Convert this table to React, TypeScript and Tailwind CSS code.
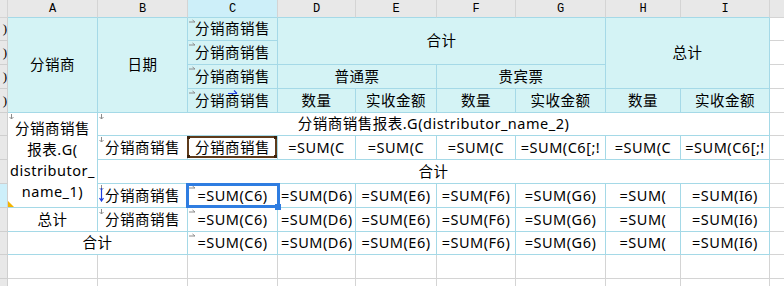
import type { ReactNode } from 'react';

const blue = 'border-[#a5d9e7]';
const grey = 'border-[#d4d4d4]';

function RightMark() {
  return (
    <svg className="absolute left-[1px] top-[1px]" width="7" height="5" viewBox="0 0 7 5">
      <path d="M0 3H6M3.5 1L6 3" stroke="#8c8c8c" strokeWidth="1" fill="none" />
    </svg>
  );
}

function DownMark() {
  return (
    <svg className="absolute left-[1px] top-[1px]" width="5" height="6" viewBox="0 0 5 6">
      <path d="M2.5 0V5M0.5 3L2.5 5L4.5 3" stroke="#8c8c8c" strokeWidth="1" fill="none" />
    </svg>
  );
}

function Cell({
  pos,
  children,
  className = '',
  mark,
}: {
  pos: string;
  children?: ReactNode;
  className?: string;
  mark?: ReactNode;
}) {
  return (
    <div className={`relative flex items-center border-r border-b ${pos} ${className}`}>
      {mark}
      <div className="w-full overflow-hidden whitespace-nowrap px-[3px] text-center">{children}</div>
    </div>
  );
}

const headers = [
  { pos: 'col-start-2', label: 'A' },
  { pos: 'col-start-3', label: 'B' },
  { pos: 'col-start-4', label: 'C' },
  { pos: 'col-start-5', label: 'D' },
  { pos: 'col-start-6', label: 'E' },
  { pos: 'col-start-7', label: 'F' },
  { pos: 'col-start-8', label: 'G' },
  { pos: 'col-start-9', label: 'H' },
  { pos: 'col-start-10', label: 'I' },
];

const rowHeads = [
  { pos: 'row-start-2', text: ')' },
  { pos: 'row-start-3', text: ')' },
  { pos: 'row-start-4', text: ')' },
  { pos: 'row-start-5', text: ')' },
  { pos: 'row-start-6', text: '' },
  { pos: 'row-start-7', text: '' },
  { pos: 'row-start-8', text: '' },
  { pos: 'row-start-9', text: '', active: true },
  { pos: 'row-start-10', text: '' },
  { pos: 'row-start-11', text: '' },
  { pos: 'row-start-12', text: '' },
  { pos: 'row-start-13', text: '' },
];

const sixRow = [
  { pos: 'col-start-5 row-start-7', text: '=SUM(C' },
  { pos: 'col-start-6 row-start-7', text: '=SUM(C' },
  { pos: 'col-start-7 row-start-7', text: '=SUM(C' },
  { pos: 'col-start-8 row-start-7', text: '=SUM(C6[;!' },
  { pos: 'col-start-9 row-start-7', text: '=SUM(C' },
  { pos: 'col-start-10 row-start-7', text: '=SUM(C6[;!' },
];

const sumRows = ['row-start-9', 'row-start-10', 'row-start-11'];
const sumCols = ['col-start-5', 'col-start-6', 'col-start-7', 'col-start-8', 'col-start-9', 'col-start-10'];
const sumTexts = ['=SUM(D6)', '=SUM(E6)', '=SUM(F6)', '=SUM(G6)', '=SUM(', '=SUM(I6)'];

const emptyCols = ['col-start-2', 'col-start-3', 'col-start-4', 'col-start-5', 'col-start-6', 'col-start-7', 'col-start-8', 'col-start-9', 'col-start-10'];
const jRows = ['row-start-2', 'row-start-3', 'row-start-4', 'row-start-5', 'row-start-6', 'row-start-7', 'row-start-8', 'row-start-9', 'row-start-10', 'row-start-11', 'row-start-12', 'row-start-13'];

export default function App() {
  const cyan = `bg-[#d4f3f5] ${blue}`;
  return (
    <div className="h-[286px] w-[784px] overflow-hidden bg-white font-['Noto_Sans','Noto_Sans_CJK_SC',sans-serif] text-[14.5px] tracking-[0.5px] text-black">
      <div className="grid grid-cols-[8px_90px_90px_90px_78px_81px_79px_90px_75px_89px_14px] grid-rows-[18px_23px_24px_24px_24px_23px_24px_24px_24px_24px_23px_24px_8px]">
        {/* column header */}
        <div className={`col-start-1 row-start-1 border-r border-b bg-[#e8e8e8] ${grey}`} />
        {headers.map((h) => (
          <div
            key={h.label}
            className={`${h.pos} row-start-1 flex items-center justify-center border-r border-b border-r-[#d4d4d4] border-b-[#a5d9e7] font-['Liberation_Mono',monospace] text-[12px] tracking-normal ${
              h.label === 'C' ? 'bg-[#cdeff9]' : 'bg-[#e8e8e8]'
            }`}
          >
            {h.label}
          </div>
        ))}
        <div className={`col-start-11 row-start-1 border-b bg-[#e8e8e8] ${grey}`} />

        {/* row header */}
        {rowHeads.map((r) => (
          <div
            key={r.pos}
            className={`col-start-1 ${r.pos} flex items-center justify-end overflow-hidden border-r border-b border-[#cfcfcf] font-['Liberation_Serif',serif] text-[13px] tracking-normal ${
              r.active ? 'bg-[#cdeffa]' : 'bg-[#e8e8e8]'
            }`}
          >
            {r.text}
          </div>
        ))}

        {/* report header */}
        <Cell pos="col-start-2 row-start-2 row-span-4" className={cyan}>分销商</Cell>
        <Cell pos="col-start-3 row-start-2 row-span-4" className={cyan}>日期</Cell>
        <Cell pos="col-start-4 row-start-2" className={cyan} mark={<RightMark />}>分销商销售</Cell>
        <Cell pos="col-start-4 row-start-3" className={cyan} mark={<RightMark />}>分销商销售</Cell>
        <Cell pos="col-start-4 row-start-4" className={cyan} mark={<RightMark />}>分销商销售</Cell>
        <Cell
          pos="col-start-4 row-start-5"
          className={cyan}
          mark={
            <>
              <RightMark />
              <svg className="absolute left-[40px] top-[1px] z-10" width="10" height="5" viewBox="0 0 10 5">
                <path d="M0 3.5H9M6 0.5L9 3.5" stroke="#1f3ee0" strokeWidth="1.2" fill="none" />
              </svg>
            </>
          }
        >
          分销商销售
        </Cell>
        <Cell pos="col-start-5 col-span-4 row-start-2 row-span-2" className={cyan}>合计</Cell>
        <Cell pos="col-start-9 col-span-2 row-start-2 row-span-3" className={cyan}>总计</Cell>
        <Cell pos="col-start-5 col-span-2 row-start-4" className={cyan}>普通票</Cell>
        <Cell pos="col-start-7 col-span-2 row-start-4" className={cyan}>贵宾票</Cell>
        <Cell pos="col-start-5 row-start-5" className={cyan}>数量</Cell>
        <Cell pos="col-start-6 row-start-5" className={cyan}>实收金额</Cell>
        <Cell pos="col-start-7 row-start-5" className={cyan}>数量</Cell>
        <Cell pos="col-start-8 row-start-5" className={cyan}>实收金额</Cell>
        <Cell pos="col-start-9 row-start-5" className={cyan}>数量</Cell>
        <Cell pos="col-start-10 row-start-5" className={cyan}>实收金额</Cell>

        {/* body */}
        <div className={`relative col-start-2 row-start-6 row-span-4 flex items-center justify-center border-r border-b ${blue}`}>
          <DownMark />
          <div className="text-center leading-[21px]">
            分销商销售
            <br />
            报表.G(
            <br />
            distributor_
            <br />
            name_1)
          </div>
          <div className="absolute bottom-0 left-0 h-0 w-0 border-t-[6px] border-r-[6px] border-t-transparent border-r-transparent border-b-0 border-l-[6px] border-l-[#f5b400]" />
        </div>
        <Cell pos="col-start-3 col-span-8 row-start-6" className={blue} mark={<DownMark />}>
          分销商销售报表.G(distributor_name_2)
        </Cell>
        <Cell pos="col-start-3 row-start-7" className={blue} mark={<DownMark />}>分销商销售</Cell>
        <Cell
          pos="col-start-4 row-start-7"
          className={blue}
          mark={
            <div className="absolute left-[-1px] top-0 z-10 h-[22px] w-[90px] border-2 border-[#5e3b1b]">
              <div className="absolute left-[-2px] top-[-2px] h-[3px] w-[3px] bg-[#3d220c]" />
              <div className="absolute right-[-2px] top-[-2px] h-[3px] w-[3px] bg-[#3d220c]" />
              <div className="absolute bottom-[-2px] left-[-2px] h-[3px] w-[3px] bg-[#3d220c]" />
              <div className="absolute bottom-[-2px] right-[-2px] h-[3px] w-[3px] bg-[#3d220c]" />
            </div>
          }
        >
          分销商销售
        </Cell>
        {sixRow.map((c) => (
          <Cell key={c.pos} pos={c.pos} className={blue}>
            {c.text}
          </Cell>
        ))}
        <Cell pos="col-start-3 col-span-8 row-start-8" className={blue}>合计</Cell>

        <Cell
          pos="col-start-3 row-start-9"
          className={blue}
          mark={
            <>
              <DownMark />
              <svg className="absolute left-[1px] top-[4px]" width="5" height="14" viewBox="0 0 5 14">
                <path d="M2.5 0V13M0.5 10L2.5 13L4.5 10" stroke="#1f3ee0" strokeWidth="1.2" fill="none" />
              </svg>
            </>
          }
        >
          分销商销售
        </Cell>
        <Cell
          pos="col-start-4 row-start-9"
          className={blue}
          mark={
            <>
              <RightMark />
              <div className="absolute left-[-2px] top-[-1px] z-10 h-[25px] w-[94px] border-[3px] border-[#2f7de1]" />
              <div className="absolute left-[87px] top-[20px] z-10 h-[6px] w-[6px] bg-[#2f7de1]" />
            </>
          }
        >
          =SUM(C6)
        </Cell>

        <Cell pos="col-start-2 row-start-10" className={blue}>总计</Cell>
        <Cell pos="col-start-3 row-start-10" className={blue} mark={<DownMark />}>分销商销售</Cell>
        <Cell pos="col-start-4 row-start-10" className={blue} mark={<RightMark />}>=SUM(C6)</Cell>

        <Cell pos="col-start-2 col-span-2 row-start-11" className={blue}>合计</Cell>
        <Cell pos="col-start-4 row-start-11" className={blue} mark={<RightMark />}>=SUM(C6)</Cell>

        {sumRows.map((row) =>
          sumCols.map((col, i) => (
            <Cell key={row + col} pos={`${col} ${row}`} className={blue}>
              {sumTexts[i]}
            </Cell>
          )),
        )}

        {/* empty rows below the report */}
        {emptyCols.map((col) => (
          <div key={col + 'a'} className={`${col} row-start-12 border-r border-b ${grey}`} />
        ))}
        {emptyCols.map((col) => (
          <div key={col + 'b'} className={`${col} row-start-13 border-r ${grey}`} />
        ))}
        {jRows.map((r) => (
          <div key={r} className={`col-start-11 ${r} border-b ${grey}`} />
        ))}
      </div>
    </div>
  );
}
